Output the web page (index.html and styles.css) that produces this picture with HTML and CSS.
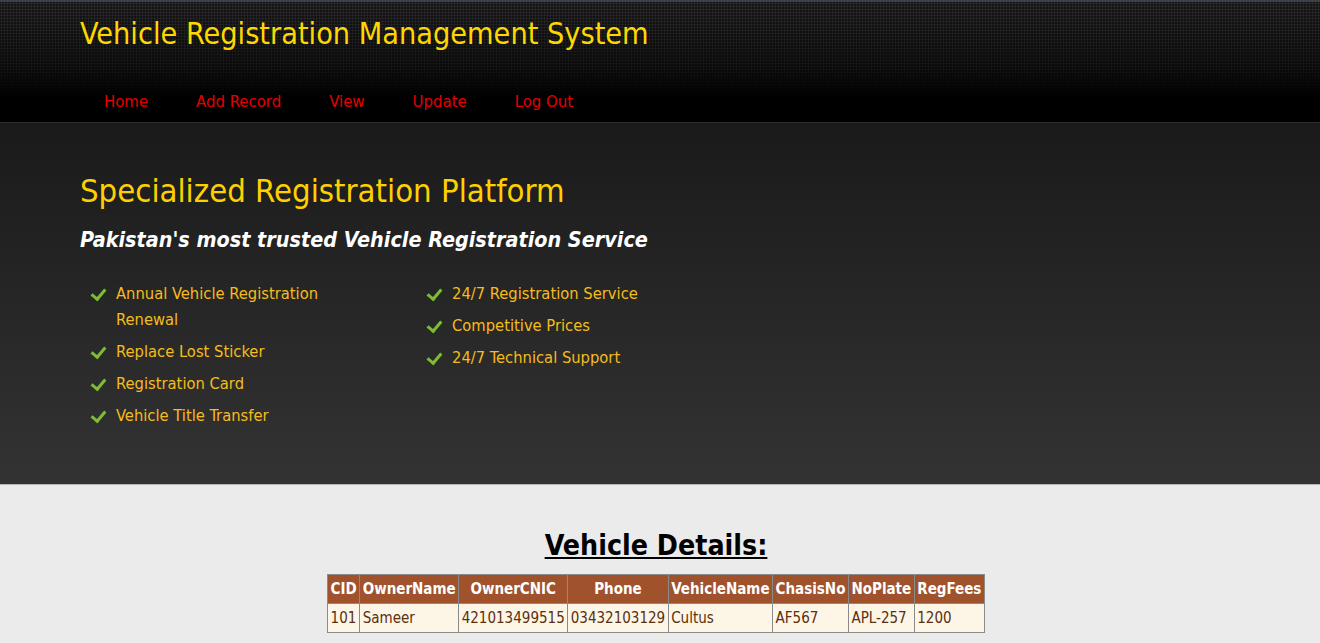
FILE: index.html
```html
<!DOCTYPE html>
<html>
<head>
<meta charset="utf-8">
<title>Vehicle Registration Management System</title>
<link rel="stylesheet" href="styles.css">
</head>
<body>
<header class="top">
  <div class="wrap">
    <h1 class="brand">Vehicle Registration Management System</h1>
    <nav class="nav">
      <a href="#">Home</a>
      <a href="#">Add Record</a>
      <a href="#">View</a>
      <a href="#">Update</a>
      <a href="#">Log Out</a>
    </nav>
  </div>
</header>
<section class="hero">
  <div class="wrap">
    <h2 class="hero-title">Specialized Registration Platform</h2>
    <p class="hero-sub">Pakistan's most trusted Vehicle Registration Service</p>
    <div class="lists">
      <ul class="checks col1">
        <li>Annual Vehicle Registration Renewal</li>
        <li>Replace Lost Sticker</li>
        <li>Registration Card</li>
        <li>Vehicle Title Transfer</li>
      </ul>
      <ul class="checks">
        <li>24/7 Registration Service</li>
        <li>Competitive Prices</li>
        <li>24/7 Technical Support</li>
      </ul>
    </div>
  </div>
</section>
<main class="content">
  <h3 class="details-title">Vehicle Details:</h3>
  <table class="records">
    <thead>
      <tr>
        <th>CID</th><th>OwnerName</th><th>OwnerCNIC</th><th>Phone</th><th>VehicleName</th><th>ChasisNo</th><th>NoPlate</th><th>RegFees</th>
      </tr>
    </thead>
    <tbody>
      <tr>
        <td>101</td><td>Sameer</td><td>421013499515</td><td>03432103129</td><td>Cultus</td><td>AF567</td><td>APL-257</td><td>1200</td>
      </tr>
    </tbody>
  </table>
</main>
</body>
</html>
```
FILE: styles.css
```css
* { box-sizing: border-box; }
html, body { margin: 0; padding: 0; }
body {
  font-family: "DejaVu Sans Condensed", "DejaVu Sans", sans-serif;
  background: #ebebeb;
}
.wrap { padding: 0 80px; }

.top {
  height: 123px;
  border-top: 2px solid #3b4148;
  border-bottom: 1px solid #2e2e2e;
  background:
    linear-gradient(to bottom, rgba(0,0,0,0) 0%, rgba(0,0,0,0.55) 55%, #000 80%, #000 100%),
    radial-gradient(circle, #2e2e2e 0.9px, transparent 1.2px) 0 0 / 3px 3px,
    #151515;
}
.brand {
  margin: 0;
  padding-top: 14px;
  height: 88px;
  font-weight: normal;
  font-size: 30.3px;
  color: #ffd700;
}
.nav {
  display: flex;
  padding-left: 24px;
}
.nav a {
  color: #e60000;
  text-decoration: none;
  font-size: 16.6px;
  margin-right: 48px;
  line-height: 24px;
}

.hero {
  height: 362px;
  background: linear-gradient(to bottom, #1a1a1a, #333333);
  border-bottom: 1px solid #b5b5b5;
  padding-top: 48px;
}
.hero-title {
  margin: 0;
  font-weight: normal;
  font-size: 32.6px;
  line-height: 40px;
  color: #ffd000;
}
.hero-sub {
  margin: 14px 0 0;
  font-size: 21.4px;
  font-weight: bold;
  font-style: italic;
  color: #ffffff;
  line-height: 30px;
}
.lists {
  display: flex;
  margin-top: 26px;
}
.checks {
  list-style: none;
  margin: 0;
  padding: 0 0 0 12px;
  width: 336px;
}
.checks li {
  position: relative;
  padding-left: 24px;
  font-size: 16.4px;
  line-height: 26px;
  margin-bottom: 6px;
  color: #f5bc1c;
}
.col1 li { max-width: 250px; }
.checks li::before {
  content: "";
  position: absolute;
  left: 2px;
  top: 5px;
  width: 6px;
  height: 11px;
  border-right: 3px solid #7bbf2e;
  border-bottom: 3px solid #7bbf2e;
  transform: rotate(40deg);
}

.content {
  text-align: center;
  padding: 45px 8px 0 0;
}
.details-title {
  margin: 0 0 12px;
  font-size: 28.3px;
  font-weight: bold;
  text-decoration: underline;
  color: #000;
  line-height: 32px;
}
.records {
  margin: 0 auto;
  border-collapse: collapse;
  font-size: 15px;
}
.records th, .records td {
  border: 1px solid #8a8a8a;
  padding: 0 2.5px;
  height: 29px;
}
.records th {
  background: #a0522d;
  color: #fff;
  font-weight: bold;
  text-align: center;
}
.records td {
  background: #fdf5e6;
  color: #5a3010;
  text-align: left;
}
```
